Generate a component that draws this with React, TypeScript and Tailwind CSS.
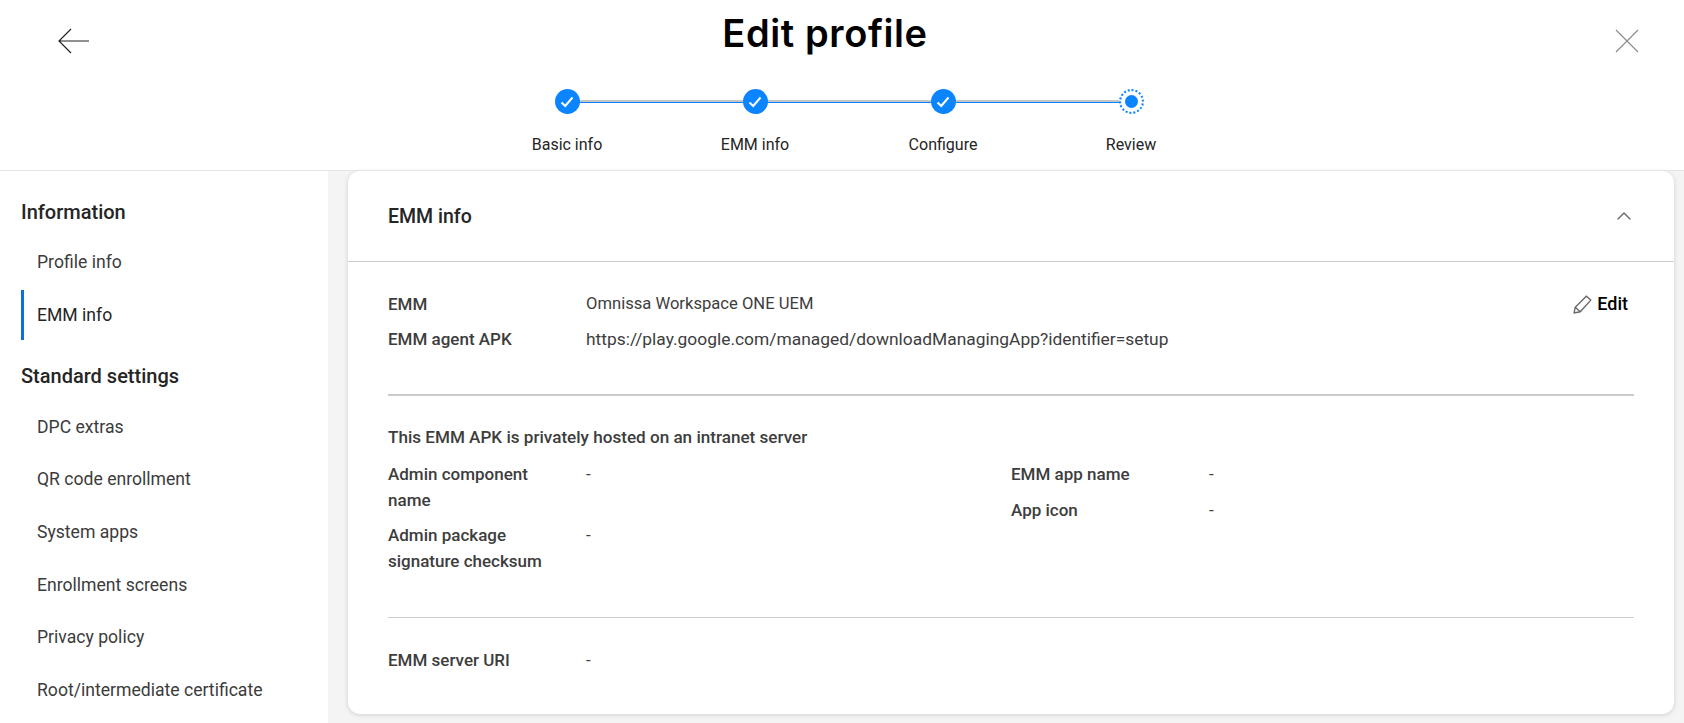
import { ChevronUp } from 'lucide-react';

const infoItems = ['Profile info', 'EMM info'];
const settingsItems = [
  'DPC extras',
  'QR code enrollment',
  'System apps',
  'Enrollment screens',
  'Privacy policy',
  'Root/intermediate certificate',
];
const steps = ['Basic info', 'EMM info', 'Configure', 'Review'];

function Step({ label, last }: { label: string; last?: boolean }) {
  return (
    <div className="flex w-[188px] flex-col items-center">
      <div className="relative h-[25px] w-full">
        {/* connector */}
        {!last && <div className="absolute left-1/2 top-[11px] h-[2px] w-full bg-[#c4c4c4]" />}
        {!last && <div className="absolute left-1/2 top-[13px] h-[1px] w-full bg-[#0a84ff]" />}
        <div className="relative mx-auto h-[25px] w-[25px]">
          {last ? (
            <div className="flex h-[25px] w-[25px] items-center justify-center rounded-full border-2 border-dotted border-[#0a84ff] bg-white">
              <div className="h-[13px] w-[13px] rounded-full bg-[#0a84ff]" />
            </div>
          ) : (
            <div className="flex h-[25px] w-[25px] items-center justify-center rounded-full bg-[#0a84ff]">
              <svg width="14" height="12" viewBox="0 0 14 12" fill="none" stroke="white" strokeWidth="2">
                <path d="M1.5 6.5 L5.2 10 L12.5 1.5" />
              </svg>
            </div>
          )}
        </div>
      </div>
      <span className="mt-[20px] text-[16px] leading-[22px] text-[#252525]">{label}</span>
    </div>
  );
}

function NavItem({ label, active }: { label: string; active?: boolean }) {
  return (
    <div className={`flex h-[50px] items-center border-l-[3px] pl-[13px] text-[17.6px] ${active ? 'border-[#0b6fe0] text-[#252525]' : 'border-transparent text-[#3b3b3b]'}`}>
      {label}
    </div>
  );
}

function Field({ label, value, valueClass = '' }: { label: string; value: string; valueClass?: string }) {
  return (
    <div className="flex text-[17px] leading-[26px]">
      <div className="w-[198px] shrink-0 pr-4 font-medium text-[#3d3d3d]">{label}</div>
      <div className={`text-[#3d3d3d] ${valueClass}`}>{value}</div>
    </div>
  );
}

export default function App() {
  return (
    <div className="flex h-[723px] w-[1684px] flex-col overflow-hidden bg-white font-['Roboto',sans-serif]">
      {/* HEADER */}
      <div className="relative h-[171px] shrink-0 border-b border-[#e4e4e4]">
        <svg className="absolute left-[58px] top-[28px]" width="32" height="26" viewBox="0 0 32 26" fill="none" stroke="#222" strokeWidth="1.2">
          <path d="M31 13H1M13 1 1 13l12 12" />
        </svg>
        <svg className="absolute left-[1615px] top-[29px]" width="24" height="24" viewBox="0 0 24 24" fill="none" stroke="#8a8a8a" strokeWidth="1.1">
          <path d="M1 1l22 22M23 1 1 23" />
        </svg>
        <h1 className="pr-[34px] pt-[9px] text-center font-['Inter',sans-serif] text-[38px] font-semibold leading-[48px] tracking-[0.6px] text-black">Edit profile</h1>
        <div className="mt-[32px] flex justify-center pl-[14px]">
          {steps.map((s, i) => (
            <Step key={s} label={s} last={i === steps.length - 1} />
          ))}
        </div>
      </div>

      <div className="flex min-h-0 flex-1 bg-[#f4f4f4]">
        {/* SIDEBAR */}
        <div className="w-[328px] shrink-0 bg-white pl-[21px] pt-[25px]">
          <p className="mb-[9px] h-[32px] text-[20px] font-medium leading-[32px] text-[#252525]">Information</p>
          <div className="flex flex-col gap-[3px]">
            {infoItems.map(x => (
              <NavItem key={x} label={x} active={x === 'EMM info'} />
            ))}
          </div>
          <p className="mb-[10px] mt-[20px] h-[32px] text-[20px] font-medium leading-[32px] text-[#252525]">Standard settings</p>
          <div className="flex flex-col gap-[2.6px]">
            {settingsItems.map(x => (
              <NavItem key={x} label={x} />
            ))}
          </div>
        </div>

        {/* CARD */}
        <div className="ml-[20px] h-[543px] w-[1326px] shrink-0 rounded-[12px] bg-white shadow-[0_1px_5px_rgba(0,0,0,0.15)]">
          <div className="flex h-[91px] items-center justify-between border-b border-[#cfcfcf] pl-[40px] pr-[38px]">
            <span className="pt-[1px] text-[19.5px] font-medium text-[#252525]">EMM info</span>
            <ChevronUp className="text-[#666]" size={24} strokeWidth={1.4} />
          </div>

          <div className="px-[40px]">
            <div className="relative border-b-2 border-[#cacaca] pb-[42px] pt-[29px]">
              <div className="flex flex-col gap-[9px]">
                <Field label="EMM" value="Omnissa Workspace ONE UEM" valueClass="text-[16.6px]" />
                <Field label="EMM agent APK" value="https://play.google.com/managed/downloadManagingApp?identifier=setup" valueClass="text-[17.4px]" />
              </div>
              <div className="absolute right-[6px] top-[29px] flex items-center gap-[4px] text-[18px] font-medium leading-[26px] text-black">
                <svg width="20" height="20" viewBox="0 0 18 18" fill="none" stroke="#666" strokeWidth="1.2">
                  <path d="M1 17l1-5L12 2l4 3.5L6.5 16 1 17zM2 12l4.5 4" />
                </svg>
                Edit
              </div>
            </div>

            <div className="border-b border-[#cfcfcf] pb-[43px] pt-[28px]">
              <p className="mb-[11px] text-[17.1px] font-medium leading-[26px] text-[#3d3d3d]">This EMM APK is privately hosted on an intranet server</p>
              <div className="flex">
                <div className="flex w-[623px] flex-col gap-[9px]">
                  <Field label="Admin component name" value="-" />
                  <Field label="Admin package signature checksum" value="-" />
                </div>
                <div className="flex flex-col gap-[10px]">
                  <Field label="EMM app name" value="-" />
                  <Field label="App icon" value="-" />
                </div>
              </div>
            </div>

            <div className="pt-[29px]">
              <Field label="EMM server URI" value="-" />
            </div>
          </div>
        </div>
      </div>
    </div>
  );
}
